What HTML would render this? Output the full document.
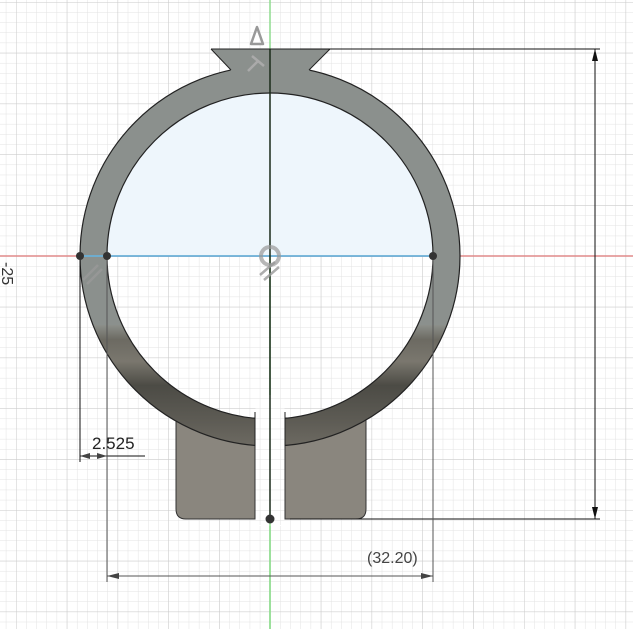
<!DOCTYPE html>
<html><head><style>html,body{margin:0;padding:0;background:#fff;overflow:hidden}</style></head>
<body>
<svg width="633" height="629" viewBox="0 0 633 629" xmlns="http://www.w3.org/2000/svg" font-family="Liberation Sans, sans-serif">
<defs>
<pattern id="minor" x="270" y="256" width="10.16" height="10.16" patternUnits="userSpaceOnUse">
<path d="M0 0H10.16M0 0V10.16" stroke="#e2e2e2" stroke-width="1" fill="none"/>
</pattern>
<pattern id="major" x="270" y="256" width="50.8" height="50.8" patternUnits="userSpaceOnUse">
<path d="M0 0H50.8M0 0V50.8" stroke="#cacaca" stroke-width="1" fill="none"/>
</pattern>
<linearGradient id="dark" gradientUnits="userSpaceOnUse" x1="0" y1="325" x2="0" y2="446">
<stop offset="0" stop-color="#8c8f8a"/>
<stop offset="0.12" stop-color="#6c6a62"/>
<stop offset="0.3" stop-color="#7a776e"/>
<stop offset="0.5" stop-color="#4c4b45"/>
<stop offset="0.8" stop-color="#5e5c55"/>
<stop offset="1" stop-color="#6d6a62"/>
</linearGradient>
<clipPath id="top"><rect x="0" y="0" width="633" height="325"/></clipPath>
<clipPath id="bot"><rect x="0" y="325" width="633" height="304"/></clipPath>
</defs>
<rect width="633" height="629" fill="#fff"/>
<rect width="633" height="629" fill="url(#minor)"/>
<rect width="633" height="629" fill="url(#major)"/>
<line x1="0" y1="256" x2="633" y2="256" stroke="#e08a8a" stroke-width="1.5"/>
<line x1="270" y1="0" x2="270" y2="629" stroke="#8fdc8f" stroke-width="1.5"/>
<path d="M176 418H255V519H186Q176 519 176 509Z" fill="#8a867e" stroke="#333" stroke-width="1"/>
<path d="M285 418H366V509Q366 519 356 519H285Z" fill="#8a867e" stroke="#333" stroke-width="1"/>
<path d="M107 256A163 163 0 0 1 433 256Z" fill="#eef6fc"/>
<g clip-path="url(#top)">
<path d="M80 256A190 190 0 1 1 460 256A190 190 0 1 1 80 256ZM107 256A163 163 0 1 0 433 256A163 163 0 1 0 107 256Z" fill="#8b908d" fill-rule="evenodd" stroke="#222" stroke-width="1.2"/>
</g>
<g clip-path="url(#bot)">
<path d="M80 256A190 190 0 1 1 460 256A190 190 0 1 1 80 256ZM107 256A163 163 0 1 0 433 256A163 163 0 1 0 107 256Z" fill="url(#dark)" fill-rule="evenodd" stroke="#222" stroke-width="1.2"/>
</g>
<rect x="255.5" y="395" width="29" height="60" fill="#fff"/>
<line x1="255" y1="412" x2="255" y2="446" stroke="#222"/>
<line x1="285" y1="412" x2="285" y2="446" stroke="#222"/>
<rect x="255.5" y="446" width="29" height="80" fill="#fff"/>
<rect x="255.5" y="395" width="29" height="130" fill="url(#minor)"/>
<line x1="270" y1="519" x2="270" y2="629" stroke="#8fdc8f" stroke-width="1.5"/>
<line x1="80" y1="256" x2="433" y2="256" stroke="#6ab0d8" stroke-width="1.8"/>
<path d="M211 49H330L309 70L318 78L222 78L231 70Z" fill="#8b908d"/>
<path d="M211 49H330L309 70M211 49L231 70" fill="none" stroke="#222" stroke-width="1"/>
<line x1="270" y1="49" x2="270" y2="519" stroke="#1a2a1a" stroke-width="1.5"/>
<g stroke="#111" stroke-width="1" fill="none">
<line x1="300" y1="49" x2="600" y2="49"/>
<line x1="290" y1="519" x2="600" y2="519"/>
<line x1="595" y1="49" x2="595" y2="519"/>
<line x1="80" y1="256" x2="80" y2="462"/>
<line x1="80" y1="456" x2="145" y2="456"/>
<line x1="107" y1="256" x2="107" y2="582" stroke="#555"/>
<line x1="433" y1="256" x2="433" y2="582" stroke="#555"/>
<line x1="107" y1="576" x2="433" y2="576" stroke="#555"/>
</g>
<path d="M595 49l-3 12h6z M595 519l-3-12h6z" fill="#111"/>
<path d="M107 576l12-3v6z M433 576l-12-3v6z M80 456l10-3v6z M107 456l-10-3v6z" fill="#444"/>
<text x="92" y="449" font-size="17" fill="#222">2.525</text>
<text x="367" y="563" font-size="16" fill="#444">(32.20)</text>
<text transform="translate(2,262) rotate(90)" font-size="16" fill="#333">-25</text>
<g fill="#333"><circle cx="80" cy="256" r="4"/><circle cx="107" cy="256" r="4"/><circle cx="433" cy="256" r="4"/><circle cx="270" cy="519" r="4.5"/></g>
<path d="M257 27L251 44H263Z" fill="none" stroke="#999" stroke-width="2.5" stroke-linejoin="round"/>
<path d="M252 56L264 66M258 61L248 71" stroke="#aaa" stroke-width="2.5" fill="none"/>
<circle cx="270" cy="256" r="9" fill="none" stroke="#999" stroke-width="4" opacity="0.7"/>
<path d="M260 275L275 262M264 280L279 267" stroke="#999" stroke-width="2.5" opacity="0.8"/>
<path d="M83 280L98 265M87 284L102 269" stroke="#999" stroke-width="2.5" opacity="0.8"/>
</svg>
</body></html>
